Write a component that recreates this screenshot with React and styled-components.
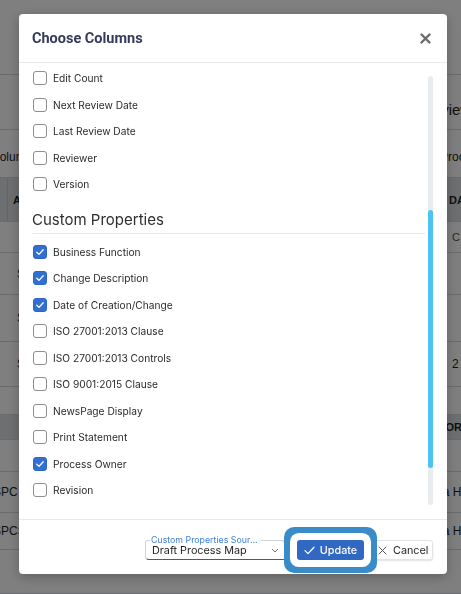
import React, { useLayoutEffect, useRef } from "react";
import styled, { createGlobalStyle } from "styled-components";

const GlobalStyle = createGlobalStyle`
  html, body {
    margin: 0;
    padding: 0;
    width: 100%;
    height: 100%;
    overflow: hidden;
  }
  body {
    font-family: Inter, "Liberation Sans", sans-serif;
    background: #fff;
  }
  * { box-sizing: border-box; }
`;

/* ---------- page behind the dialog ---------- */

const Page = styled.div`
  width: 461px;
  height: 594px;
  overflow: hidden;
  display: flex;
  flex-direction: column;
  background: #fff;
`;

const BgRow = styled.div`
  flex: none;
  height: ${(p) => p.h}px;
  padding-top: ${(p) => p.pad || 0}px;
  display: flex;
  align-items: center;
  border-bottom: 1px solid #d4d7dc;
  background: ${(p) => (p.shade ? "#dcdfe3" : "#fff")};
  font-family: "Liberation Sans", Arial, sans-serif;
  font-size: ${(p) => p.size || 12}px;
  font-weight: ${(p) => (p.bold ? 700 : 400)};
  color: #1e1e1e;
  white-space: nowrap;
`;

const BgLeft = styled.span`
  flex: none;
  width: ${(p) => p.w}px;
  text-indent: ${(p) => p.x}px;
  align-self: stretch;
  display: flex;
  align-items: center;
  background: ${(p) =>
    p.divider ? "linear-gradient(#c4c8ce, #c4c8ce) 7px 0 / 1px 100% no-repeat" : "none"};
`;

const BgRight = styled.span`
  flex: none;
  color: ${(p) => (p.muted ? "#555" : "inherit")};
`;

const rows = [
  { h: 75 },
  { h: 55, pad: 14, size: 15, right: "Review", rx: 422 },
  { h: 48, pad: 6, left: "Columns", lx: -9, right: "Process Map", rx: 440 },
  { h: 44, shade: true, bold: true, size: 11, left: "ACTIONS", lx: 13, divider: true, right: "DATE", rx: 449 },
  { h: 31, size: 11, right: "C", rx: 452, muted: true },
  { h: 42, left: "S", lx: 17 },
  { h: 47, left: "S", lx: 17 },
  { h: 45, left: "S", lx: 17, right: "2", rx: 452 },
  { h: 28 },
  { h: 25, shade: true, bold: true, size: 11, right: "AUTHOR", rx: 415 },
  { h: 32 },
  { h: 41, left: "SPC", lx: -7, right: "Ana Hill", rx: 428 },
  { h: 37, left: "SPCS", lx: -7, right: "Ana Hill", rx: 428 },
  { h: 44 },
];

/* ---------- dialog ---------- */

const Overlay = styled.div`
  position: fixed;
  inset: 0;
  background: rgba(0, 0, 0, 0.5);
  padding: 14px 14px 20px 19px;
  display: flex;
`;

const Modal = styled.div`
  flex: 1;
  background: #fff;
  border-radius: 4px;
  display: flex;
  flex-direction: column;
  overflow: hidden;
  box-shadow: 0 3px 12px rgba(0, 0, 0, 0.25);
`;

const Header = styled.div`
  flex: none;
  height: 49px;
  padding: 0 16px 0 13px;
  display: flex;
  align-items: center;
  justify-content: space-between;
  border-bottom: 1px solid #e8eaed;
`;

const Title = styled.h2`
  margin: 0;
  font-family: Roboto, Inter, sans-serif;
  font-size: 14.5px;
  font-weight: 700;
  color: #363a5b;
`;

const CloseButton = styled.button`
  border: none;
  background: none;
  padding: 0;
  width: 11px;
  height: 11px;
  display: flex;
  cursor: pointer;
`;

const Body = styled.div`
  flex: 1;
  position: relative;
  overflow: hidden;
`;

const Scroller = styled.div`
  position: relative;
  height: 100%;
  overflow-y: scroll;
  scrollbar-width: none;
  padding: 8px 22px 24px 14px;
  &::-webkit-scrollbar { display: none; }
`;

const Track = styled.div`
  position: absolute;
  right: 14px;
  top: 13px;
  bottom: 14px;
  width: 5px;
  border-radius: 3px;
  background: #e9ecef;
`;

const Thumb = styled.div`
  position: absolute;
  left: 0;
  right: 0;
  top: 134px;
  height: 258px;
  border-radius: 3px;
  background: #4dc3f1;
`;

const SectionTitle = styled.h3`
  margin: ${(p) => (p.first ? "4px" : "12px")} 0 5px -1px;
  padding: 0 0 3px 0;
  font-family: Inter, "Liberation Sans", sans-serif;
  font-size: 15px;
  line-height: 20px;
  font-weight: 400;
  color: #2f2f2f;
  border-bottom: 1px solid #e6e8eb;
`;

const Row = styled.label`
  height: 26.5px;
  display: flex;
  align-items: center;
  gap: 6px;
  font-size: 10.2px;
  color: #2a2a2a;
`;

const Box = styled.span`
  flex: none;
  width: 14px;
  height: 14px;
  border-radius: 3px;
  border: 1px solid ${(p) => (p.checked ? "#2d66c6" : "#8d8d8d")};
  background: ${(p) => (p.checked ? "#3170d2" : "#fff")};
  display: flex;
  align-items: center;
  justify-content: center;
`;

const Footer = styled.div`
  flex: none;
  height: 55px;
  border-top: 1px solid #e8eaed;
  padding: 6px 14px 0 0;
  display: flex;
  align-items: center;
  justify-content: flex-end;
`;

const SelectField = styled.div`
  position: relative;
  width: 140px;
  height: 20px;
  margin-right: 12px;
  border: 1px solid #cfd2d6;
  border-bottom: 1.5px solid #2c5ea9;
  border-radius: 3px 3px 2px 4px;
  display: flex;
  align-items: center;
  justify-content: space-between;
  padding: 0 5px 0 6px;
`;

const FloatLabel = styled.span`
  position: absolute;
  top: -6px;
  left: 4px;
  max-width: 110px;
  padding: 0 1px;
  background: #fff;
  font-size: 8.8px;
  line-height: 10px;
  color: #3b7fd6;
  white-space: nowrap;
  overflow: hidden;
  text-overflow: ellipsis;
`;

const SelectValue = styled.span`
  font-size: 10.8px;
  color: #1f1f1f;
  white-space: nowrap;
`;

const Button = styled.button`
  position: relative;
  height: 20px;
  border-radius: 3px;
  font-family: Inter, "Liberation Sans", sans-serif;
  font-size: 10.8px;
  display: flex;
  align-items: center;
  padding: 0;
  cursor: pointer;
`;

const PrimaryButton = styled(Button)`
  z-index: 1;
  width: 67px;
  justify-content: center;
  gap: 5px;
  border: none;
  background: #3068c4;
  color: #fff;
  font-weight: 500;
  box-shadow: 0 0 0 7px #fff, 0 0 0 13px #3a8cc8;
`;

const GhostButton = styled(Button)`
  width: 63px;
  margin-left: 6px;
  padding-left: 7px;
  gap: 6px;
  border: 1px solid #e2e4e7;
  background: #fff;
  color: #1f1f1f;
  box-shadow: 0 1px 2px rgba(0, 0, 0, 0.12);
`;

const standard = [
  "Document ID",
  "Title",
  "Status",
  "Author",
  "Owner",
  "Created Date",
  "Modified Date",
  "Published Date",
  "Edit Count",
  "Next Review Date",
  "Last Review Date",
  "Reviewer",
  "Version",
];

const custom = [
  ["Business Function", true],
  ["Change Description", true],
  ["Date of Creation/Change", true],
  ["ISO 27001:2013 Clause", false],
  ["ISO 27001:2013 Controls", false],
  ["ISO 9001:2015 Clause", false],
  ["NewsPage Display", false],
  ["Print Statement", false],
  ["Process Owner", true],
  ["Revision", false],
];

function Checkbox({ checked }) {
  return (
    <Box checked={checked}>
      {checked && (
        <svg width="10" height="10" viewBox="0 0 10 10">
          <path d="M1.8 5.2 L4 7.4 L8.2 2.8" fill="none" stroke="#fff" strokeWidth="1.3" strokeLinecap="round" strokeLinejoin="round" />
        </svg>
      )}
    </Box>
  );
}

function Item({ label, checked, rowRef }) {
  return (
    <Row ref={rowRef}>
      <Checkbox checked={checked} />
      {label}
    </Row>
  );
}

export default function App() {
  const scrollerRef = useRef(null);
  const anchorRef = useRef(null);

  useLayoutEffect(() => {
    if (scrollerRef.current && anchorRef.current) {
      scrollerRef.current.scrollTop = anchorRef.current.offsetTop - 2;
    }
  }, []);

  return (
    <>
      <GlobalStyle />
      <Page>
        {rows.map((r, i) => (
          <BgRow key={i} h={r.h} pad={r.pad} shade={r.shade} bold={r.bold} size={r.size}>
            <BgLeft w={r.rx || 461} x={r.lx || 0} divider={r.divider}>
              {r.left}
            </BgLeft>
            {r.right && <BgRight muted={r.muted}>{r.right}</BgRight>}
          </BgRow>
        ))}
      </Page>

      <Overlay>
        <Modal>
          <Header>
            <Title>Choose Columns</Title>
            <CloseButton aria-label="Close">
              <svg width="11" height="11" viewBox="0 0 11 11">
                <path d="M1.5 1.5 L9.5 9.5 M9.5 1.5 L1.5 9.5" stroke="#6b6b6b" strokeWidth="2.4" strokeLinecap="round" />
              </svg>
            </CloseButton>
          </Header>

          <Body>
            <Scroller ref={scrollerRef}>
              <SectionTitle first>Standard Properties</SectionTitle>
              {standard.map((s) => (
                <Item key={s} label={s} checked={false} rowRef={s === "Edit Count" ? anchorRef : undefined} />
              ))}
              <SectionTitle>Custom Properties</SectionTitle>
              {custom.map(([s, c]) => (
                <Item key={s} label={s} checked={c} />
              ))}
            </Scroller>
            <Track>
              <Thumb />
            </Track>
          </Body>

          <Footer>
            <SelectField>
              <FloatLabel>Custom Properties Source Map</FloatLabel>
              <SelectValue>Draft Process Map</SelectValue>
              <svg width="8" height="5" viewBox="0 0 8 5">
                <path d="M1 1 L4 4 L7 1" fill="none" stroke="#777" strokeWidth="1" />
              </svg>
            </SelectField>
            <PrimaryButton>
              <svg width="11" height="9" viewBox="0 0 11 9">
                <path d="M1 4.6 L4 7.6 L10 1.2" fill="none" stroke="#fff" strokeWidth="1.3" strokeLinecap="round" strokeLinejoin="round" />
              </svg>
              Update
            </PrimaryButton>
            <GhostButton>
              <svg width="9" height="9" viewBox="0 0 9 9">
                <path d="M1 1 L8 8 M8 1 L1 8" stroke="#555" strokeWidth="1" strokeLinecap="round" />
              </svg>
              Cancel
            </GhostButton>
          </Footer>
        </Modal>
      </Overlay>
    </>
  );
}
